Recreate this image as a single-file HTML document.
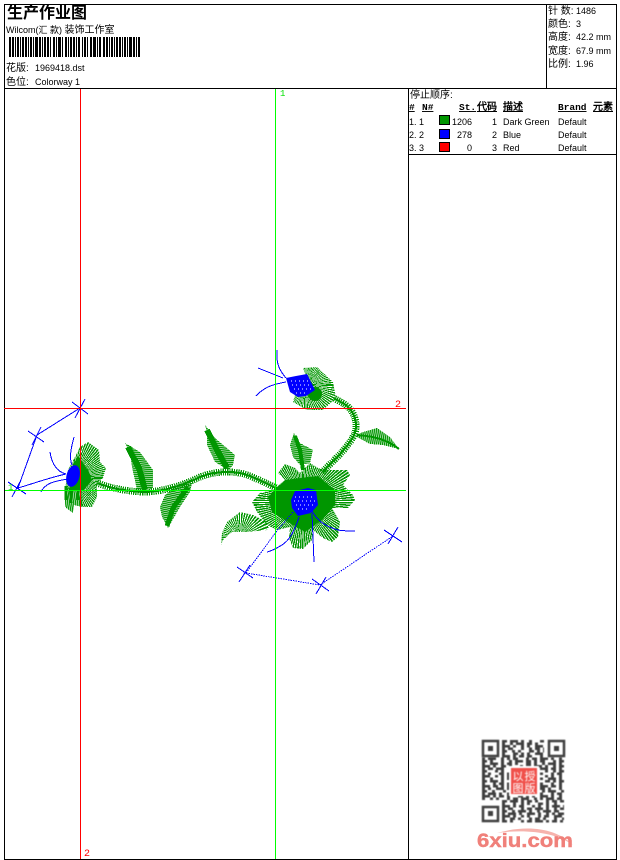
<!DOCTYPE html>
<html><head><meta charset="utf-8"><title>生产作业图</title>
<style>
html,body{margin:0;padding:0;background:#fff;width:620px;height:860px;overflow:hidden}
svg{display:block}
text{font-family:"Liberation Sans","WenQuanYi Zen Hei","Noto Sans CJK SC",sans-serif;font-size:9px;fill:#000}
.cn{font-size:10px}
.h{font-family:"Liberation Mono","WenQuanYi Zen Hei",monospace;font-size:9.5px;font-weight:bold;text-decoration:underline}
</style></head><body>
<svg width="620" height="860" viewBox="0 0 620 860" xmlns="http://www.w3.org/2000/svg">
<defs>
<pattern id="hz" width="2" height="2" patternUnits="userSpaceOnUse" patternTransform="rotate(5)"><rect width="2" height="1.4" fill="#009600"/></pattern>
<pattern id="hz2" width="2" height="2" patternUnits="userSpaceOnUse" patternTransform="rotate(-12)"><rect width="2" height="1.4" fill="#009600"/></pattern>
<pattern id="vt" width="2" height="2" patternUnits="userSpaceOnUse" patternTransform="rotate(8)"><rect width="1.4" height="2" fill="#009600"/></pattern>
<clipPath id="cMain"><polygon points="252,502 260,493 273,490 285,480 278,473 285,464 295,468 300,473 310,463 318,468 325,470 347,470 350,475 343,485 353,495 355,500 348,508 332,508 340,522 338,537 332,542 323,538 313,530 312,540 303,549 293,548 289,538 290,527 277,530 267,525 257,512"/></clipPath>
<clipPath id="cLeft"><polygon points="80,447 88,442 99,450 100,462 106,468 103,478 97,483 97,497 92,507 82,507 80,490 65,490 68,470 75,457"/></clipPath>
<clipPath id="cBud"><polygon points="303,368 317,367 333,382 336,398 323,410 307,410 293,402 295,395 313,390 305,373"/></clipPath>
<clipPath id="cFan"><polygon points="221,545 222,533 227,522 240,512 253,515 273,525 267,530 247,532 232,532 223,540"/></clipPath>
</defs>

<!-- frame -->
<g fill="#000" shape-rendering="crispEdges">
<rect x="4" y="4" width="613" height="1"/>
<rect x="4" y="88" width="613" height="1"/>
<rect x="4" y="4" width="1" height="856"/>
<rect x="616" y="4" width="1" height="856"/>
<rect x="4" y="859" width="613" height="1"/>
<rect x="546" y="4" width="1" height="84"/>
<rect x="408" y="88" width="1" height="771"/>
<rect x="408" y="154" width="208" height="1"/>
</g>

<!-- header -->
<text x="7" y="18" style="font-size:16px;font-weight:bold">生产作业图</text>
<text x="6" y="33">Wilcom(汇 款) <tspan style="font-size:10px">装饰工作室</tspan></text>
<line x1="9" y1="47" x2="140" y2="47" stroke="#000" stroke-width="20" shape-rendering="crispEdges" stroke-dasharray="2 1 2 1 1 1 2 1 1 1 2 1 2 1 1 1 2 1 1 1 3 1 2 1 1 1 2 1 2 1 1 2 2 1 1 1 3 1 1 2 2 1 1 1 2 1 2 1 1 1 2 2 1 1 2 1 1 2 2 1 3 1 1 1 2 2"/>
<text x="6" y="71" class="cn">花版:</text><text x="35" y="71">1969418.dst</text>
<text x="6" y="85" class="cn">色位:</text><text x="35" y="85">Colorway 1</text>

<text x="548" y="14" class="cn">针 数:</text><text x="576" y="14">1486</text>
<text x="548" y="27" class="cn">颜色:</text><text x="576" y="27">3</text>
<text x="548" y="40" class="cn">高度:</text><text x="576" y="40">42.2 mm</text>
<text x="548" y="54" class="cn">宽度:</text><text x="576" y="54">67.9 mm</text>
<text x="548" y="67" class="cn">比例:</text><text x="576" y="67">1.96</text>

<!-- legend -->
<text x="410" y="98" class="cn">停止顺序:</text>
<text x="409" y="110" class="h">#</text>
<text x="422" y="110" class="h">N#</text>
<text x="459" y="110" class="h">St.</text>
<text x="477" y="110" class="h" style="font-size:10px">代码</text>
<text x="503" y="110" class="h" style="font-size:10px">描述</text>
<text x="558" y="110" class="h">Brand</text>
<text x="593" y="110" class="h" style="font-size:10px">元素</text>

<g shape-rendering="crispEdges" stroke="#000">
<rect x="439.5" y="115.5" width="10" height="9" fill="#009600"/>
<rect x="439.5" y="129.5" width="10" height="9" fill="#0000ff"/>
<rect x="439.5" y="142.5" width="10" height="9" fill="#ff0000"/>
</g>
<text x="409" y="125">1. 1</text><text x="472" y="125" text-anchor="end">1206</text><text x="497" y="125" text-anchor="end">1</text><text x="503" y="125">Dark Green</text><text x="558" y="125">Default</text>
<text x="409" y="138">2. 2</text><text x="472" y="138" text-anchor="end">278</text><text x="497" y="138" text-anchor="end">2</text><text x="503" y="138">Blue</text><text x="558" y="138">Default</text>
<text x="409" y="151">3. 3</text><text x="472" y="151" text-anchor="end">0</text><text x="497" y="151" text-anchor="end">3</text><text x="503" y="151">Red</text><text x="558" y="151">Default</text>

<!-- embroidery green -->
<g fill="none" stroke="#009600" stroke-linecap="butt" shape-rendering="crispEdges">
<path d="M97,483 C110,488 125,491 143,492 C165,492 185,484 200,477 C215,471 235,470 250,476 C262,481 272,486 280,490" stroke-width="7" stroke-dasharray="1.2 1"/>
<path d="M97,483 C110,488 125,491 143,492 C165,492 185,484 200,477 C215,471 235,470 250,476 C262,481 272,486 280,490" stroke-width="2"/>
<path d="M322,472 C335,460 350,445 355,433 C358,422 354,412 347,406 C342,402 338,401 334,398" stroke-width="7" stroke-dasharray="1.2 1"/>
<path d="M322,472 C335,460 350,445 355,433 C358,422 354,412 347,406 C342,402 338,401 334,398" stroke-width="2"/>
</g>
<g stroke="none" shape-rendering="crispEdges">
<polygon fill="url(#hz)" points="125,443 140,452 153,470 153,488 137,490 132,467 130,453"/>
<path d="M128,447 L139,468 L145,490" fill="none" stroke="#009600" stroke-width="6"/>
<polygon fill="url(#hz)" points="205,425 215,438 235,455 233,465 228,470 215,462 207,445 207,433"/>
<path d="M207,430 L217,450 L227,468" fill="none" stroke="#009600" stroke-width="6"/>
<polygon fill="url(#hz2)" points="192,483 190,492 180,507 168,528 162,517 160,507 165,495 175,487"/>
<path d="M188,487 L173,508 L167,526" fill="none" stroke="#009600" stroke-width="5"/>
<polygon fill="url(#hz)" points="294,433 300,443 313,450 310,463 300,465 293,457 290,445"/>
<path d="M295,436 L300,450 L303,470" fill="none" stroke="#009600" stroke-width="4"/>
<polygon fill="url(#vt)" points="360,433 377,428 390,437 399,449 383,445 370,444 357,437"/>
<path d="M357,435 C370,436 385,438 399,449" fill="none" stroke="#009600" stroke-width="2"/>
</g>
<!-- main flower radial -->
<g clip-path="url(#cMain)">
<circle cx="303" cy="502" r="28" fill="none" stroke="#009600" stroke-width="56" stroke-dasharray="1 .5" shape-rendering="crispEdges"/>
<polygon points="268,497 285,480 300,478 318,476 335,490 335,505 322,520 305,532 288,522 272,512" fill="#009600"/>
</g>
<g clip-path="url(#cFan)"><circle cx="240" cy="537" r="15" fill="none" stroke="#009600" stroke-width="30" stroke-dasharray="1 .7" shape-rendering="crispEdges"/></g>
<!-- left flower radial -->
<g clip-path="url(#cLeft)">
<circle cx="73" cy="478" r="22" fill="none" stroke="#009600" stroke-width="44" stroke-dasharray=".9 .5" shape-rendering="crispEdges"/>
<polygon points="70,470 78,456 88,470 92,480 84,490 70,490" fill="#009600"/>
</g>
<polygon points="65,488 82,488 82,507 74,505 73,513 65,507" fill="url(#vt)" shape-rendering="crispEdges"/>
<path d="M66,486V500M71,486V503M78,486V500" stroke="#009600" stroke-width="3" fill="none"/>
<!-- bud -->
<g clip-path="url(#cBud)">
<circle cx="305" cy="385" r="19" fill="none" stroke="#009600" stroke-width="38" stroke-dasharray=".9 .6" shape-rendering="crispEdges"/>
<circle cx="315" cy="394" r="7" fill="#009600"/>
</g>

<!-- blue -->
<g fill="#0000ff" stroke="none">
<polygon points="291,500 295,491 308,488 316,490 318,505 311,513 298,516 292,508"/>
<polygon points="286,378 296,376 307,374 315,390 306,396 298,397 290,392"/>
<ellipse cx="73" cy="476" rx="6.5" ry="11" transform="rotate(15 73 476)"/>
</g>
<g stroke="#fff" stroke-width=".7" fill="none" stroke-dasharray="1 3" shape-rendering="crispEdges"><path d="M295,497H313M294,501H315M296,505H313M298,509H310"/><path d="M291,381H310M292,385H312M294,389H312M296,393H308"/></g>
<g fill="none" stroke="#0000ff" stroke-width="1" shape-rendering="crispEdges">
<path d="M74,437C71,448 69,458 72,465M50,452C52,465 58,472 66,474M41,492C45,483 55,481 68,479M18,488C32,484 48,478 66,474"/>
<path d="M277,350C276,363 279,370 286,378M258,368L283,378M256,396C265,386 275,384 286,382"/>
<path d="M299,517C295,530 290,540 282,545C277,548 272,551 267,552M312,513L314,562M310,507C316,520 324,526 338,530C343,531 350,531 355,531"/>
<path d="M72,402L88,414M85,399L75,418"/>
<path d="M28,431L44,442M41,427L32,445"/>
<path d="M8,482L26,494M21,480L12,497"/>
<path d="M237,567L253,578M250,565L239,582"/>
<path d="M312,579L329,591M326,577L316,594"/>
<path d="M384,530L402,542M398,527L388,544"/>
<path d="M18,488L37,435L80,408"/>
<path stroke-dasharray="1.5 1" d="M246,573L276,532M293,512L276,532M246,573L320,585L393,536"/>
</g>

<!-- guide lines -->
<g shape-rendering="crispEdges">
<rect x="275" y="89" width="1" height="770" fill="#00ff00"/>
<rect x="5" y="490" width="401" height="1" fill="#00ff00"/>
<rect x="80" y="89" width="1" height="770" fill="#ff0000"/>
<rect x="4" y="408" width="402" height="1" fill="#ff0000"/>
</g>
<text x="280" y="96" style="fill:#00e000;font-family:'Liberation Mono',monospace">1</text>
<text x="8" y="490" style="fill:#00e000;font-family:'Liberation Mono',monospace">1</text>
<text x="395" y="407" style="fill:#ff0000;font-family:'Liberation Mono',monospace;font-size:10px">2</text>
<text x="84" y="856" style="fill:#ff0000;font-family:'Liberation Mono',monospace;font-size:10px">2</text>

<!-- QR -->
<g style="filter:blur(.45px)">
<g stroke="#3f3f3f" fill="none" stroke-width="2.6" shape-rendering="crispEdges">
<path stroke-dasharray="5 3 8 3 3 5 3 8 5 3 8" d="M502,741.3H544"/>
<path stroke-dasharray="3 5 3 3 8 3 5 3 3 8" d="M502,743.8H544"/>
<path stroke-dasharray="8 3 3 5 3 3 3 5 8 3" d="M502,746.3H544"/>
<path stroke-dasharray="3 3 5 8 3 5 3 3 5 3" d="M502,748.8H544"/>
<path stroke-dasharray="5 5 3 3 3 8 5 3 3 3" d="M502,751.3H544"/>
<path stroke-dasharray="3 8 5 3 3 3 3 5 8 3" d="M502,753.8H544"/>
<path stroke-dasharray="8 3 3 3 5 3 5 8 3 3" d="M502,756.3H544"/>
<path stroke-dasharray="3 3 8 5 3 3 3 3 5 8 3 3 5 3 8 3 3 5 3 3 8 5 3" d="M482,758.8H564"/>
<path stroke-dasharray="5 3 3 8 3 5 3 3 8 3 5 3 3 3 5 8 3 3 5 3 3 3 8" d="M482,761.3H564"/>
<path stroke-dasharray="3 5 8 3 3 3 5 3 3 8 5 3 3 5 3 3 8 3 3 5 3 8 3" d="M482,763.8H564"/>
<path stroke-dasharray="8 3 3 5 5 3 3 8 3 3 5 3 8 3 3 5 3 3 5 8 3" d="M482,766.3H564"/>
<path stroke-dasharray="3 3 5 3 8 5 3 3 3 8 3 5 3 3 8 3 5 3 3 5 3 3 8" d="M482,768.8H564"/>
<path stroke-dasharray="5 8 3 3 3 5 3 3 8 5 3 3 3 8 3 5 3 3 5 3 8" d="M482,771.3H564"/>
<path stroke-dasharray="3 3 3 8 5 3 3 5 3 8 3 3 5 3 3 8 3 3 5 5 3 3" d="M482,773.8H564"/>
<path stroke-dasharray="8 5 3 3 3 3 8 3 5 3 3 5 3 8 3 3 3 5 3 3 8" d="M482,776.3H564"/>
<path stroke-dasharray="3 5 3 8 3 3 5 3 3 3 8 5 3 3 3 5 8 3 3 5 3" d="M482,778.8H564"/>
<path stroke-dasharray="5 3 8 3 3 5 3 8 3 3 3 5 3 8 5 3 3 3 5 3" d="M482,781.3H564"/>
<path stroke-dasharray="3 8 3 3 5 3 3 5 8 3 3 3 5 3 3 8 3 5 3 3" d="M482,783.8H564"/>
<path stroke-dasharray="8 3 5 3 3 3 8 3 3 5 3 5 3 3 8 3 5 3 3 8" d="M482,786.3H564"/>
<path stroke-dasharray="3 3 3 5 8 3 5 3 3 3 8 3 3 5 5 3 3 8 3 3" d="M482,788.8H564"/>
<path stroke-dasharray="5 5 3 8 3 3 3 5 3 8 3 3 5 3 3 3 8 5 3 3" d="M482,791.3H564"/>
<path stroke-dasharray="3 3 8 3 3 5 5 3 3 3 8 5 3 3 3 8 3 3 5 3" d="M482,793.8H564"/>
<path stroke-dasharray="8 3 3 3 5 3 3 8 5 3 3 3 3 5 8 3 3 5 3 3" d="M482,796.3H564"/>
<path stroke-dasharray="3 5 3 3 3 8 3 3 5 3 8 5 3 3 3 3 8 3 5 3" d="M482,798.8H564"/>
<path stroke-dasharray="5 3 8 3 3 3 5 3 3 8 3 3" d="M502,801.3H564"/>
<path stroke-dasharray="3 8 3 5 3 3 3 8 5 3 3 5" d="M502,803.8H564"/>
<path stroke-dasharray="8 3 3 3 5 8 3 3 3 5 3 3" d="M502,806.3H564"/>
<path stroke-dasharray="3 3 5 8 3 3 5 3 8 3 3 5" d="M502,808.8H564"/>
<path stroke-dasharray="5 5 3 3 8 3 3 5 3 3 8 3" d="M502,811.3H564"/>
<path stroke-dasharray="3 3 8 3 3 5 8 3 3 5 3 3" d="M502,813.8H564"/>
<path stroke-dasharray="8 3 3 5 3 3 3 8 3 3 5 5" d="M502,816.3H564"/>
<path stroke-dasharray="3 5 5 3 3 8 3 3 5 3 3 8" d="M502,818.8H564"/>
<path stroke-dasharray="5 3 3 8 3 3 5 3 8 3 3 3" d="M502,821.3H564"/>
</g>
<g fill="none" stroke="#3f3f3f" stroke-width="2.5">
<rect x="483" y="741" width="15" height="15"/><rect x="549" y="741" width="15" height="15" fill="#fff"/><rect x="483" y="807" width="15" height="14"/>
<rect x="488" y="746" width="5" height="5" fill="#3f3f3f" stroke="none"/><rect x="554" y="746" width="5" height="5" fill="#3f3f3f" stroke="none"/><rect x="488" y="811" width="5" height="5" fill="#3f3f3f" stroke="none"/>
</g>
<rect x="509" y="766" width="30" height="30" fill="#fff"/>
<rect x="511" y="768" width="26" height="26" fill="#f0504a"/>
<text x="518" y="780" text-anchor="middle" style="fill:#fff;font-size:11px">以</text><text x="530" y="780" text-anchor="middle" style="fill:#fff;font-size:11px">授</text>
<text x="518" y="792" text-anchor="middle" style="fill:#fff;font-size:11px">图</text><text x="530" y="792" text-anchor="middle" style="fill:#fff;font-size:11px">版</text>
</g>
<!-- logo -->
<path d="M497,833 C525,825 555,827 573,845 C555,832 525,829 497,833Z" fill="#f6b3ad"/>
<text x="477" y="847" textLength="96" lengthAdjust="spacingAndGlyphs" style="font-size:19.5px;font-weight:bold;fill:#f0807a;stroke:#f0807a;stroke-width:.4">6xiu.com</text>
</svg>
</body></html>
